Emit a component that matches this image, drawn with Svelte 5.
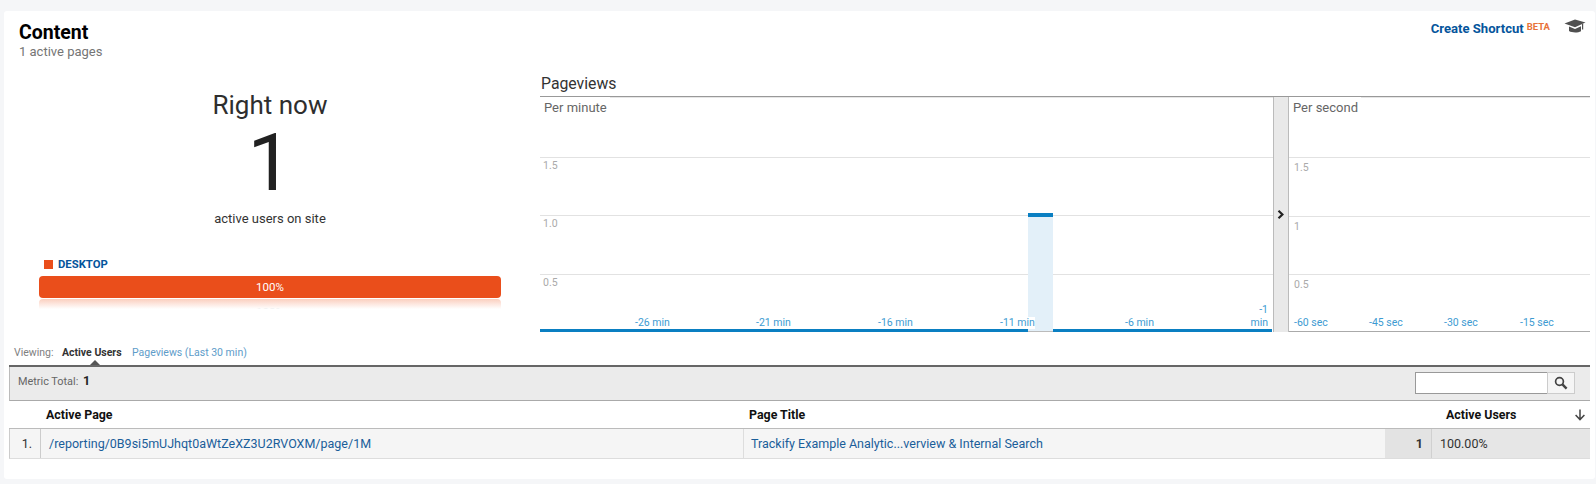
<script>
	const minuteGrid = [
		{ y: 59, label: '1.5' },
		{ y: 117, label: '1.0' },
		{ y: 176, label: '0.5' }
	];
	const secondGrid = [
		{ y: 59, label: '1.5' },
		{ y: 118, label: '1' },
		{ y: 176, label: '0.5' }
	];
	const minuteTicks = [
		{ x: 95, label: '-26 min' },
		{ x: 216, label: '-21 min' },
		{ x: 338, label: '-16 min' },
		{ x: 460, label: '-11 min' },
		{ x: 585, label: '-6 min' }
	];
	const secondTicks = [
		{ x: 5, label: '-60 sec' },
		{ x: 80, label: '-45 sec' },
		{ x: 155, label: '-30 sec' },
		{ x: 231, label: '-15 sec' }
	];
</script>

<div class="card">
	<header class="head">
		<div>
			<h1>Content</h1>
			<p class="sub">1 active pages</p>
		</div>
		<div class="shortcut">
			<a href="#top">Create Shortcut</a>
			<sup>BETA</sup>
			<svg class="cap" width="22" height="14" viewBox="0 0 22 14" aria-hidden="true">
				<path d="M0.5 4.5 11 0.5 21.5 3.6 11 8.2Z" fill="#505050" />
				<path d="M5 7.6 11 10 17 7.3V12.2C14 13.9 8 13.9 5 12Z" fill="#505050" />
				<path d="M18.6 5V10.6" stroke="#505050" stroke-width="1.2" />
			</svg>
		</div>
	</header>

	<section class="top">
		<div class="summary">
			<div class="now">Right now</div>
			<div class="count">1</div>
			<div class="users">active users on site</div>
			<div class="legend"><i></i><span>DESKTOP</span></div>
			<div class="bar">100%</div>
			<div class="mirror"><span>100%</span></div>
		</div>

		<div class="charts">
			<h2>Pageviews</h2>
			<div class="panels">
				<div class="plot minute">
					<div class="caption">Per minute</div>
					{#each minuteGrid as g}
						<div class="grid" style="top: {g.y}px"></div>
						<div class="ylabel" style="top: {g.y + 3}px">{g.label}</div>
					{/each}
					<div class="baseline"></div>
					<div class="column"></div>
					{#each minuteTicks as t}
						<div class="tick" style="left: {t.x}px">{t.label}</div>
					{/each}
					<div class="tick last">-1<br />min</div>
				</div>
				<div class="divider">
					<svg width="8" height="9" viewBox="0 0 8 9" aria-hidden="true">
						<path d="M1.5 0.8 5.4 4.5 1.5 8.2" fill="none" stroke="#222" stroke-width="2.2" />
					</svg>
				</div>
				<div class="plot second">
					<div class="caption">Per second</div>
					{#each secondGrid as g}
						<div class="grid" style="top: {g.y}px"></div>
						<div class="ylabel sec" style="top: {g.y + 5}px">{g.label}</div>
					{/each}
					{#each secondTicks as t}
						<div class="tick sec" style="left: {t.x}px">{t.label}</div>
					{/each}
				</div>
			</div>
		</div>
	</section>

	<nav class="tabs">
		<span class="viewing">Viewing:</span>
		<span class="active">Active Users</span>
		<a href="#top">Pageviews (Last 30 min)</a>
	</nav>

	<section class="table">
		<div class="toolbar">
			<div class="total">Metric Total: <b>1</b></div>
			<div class="search">
				<input type="text" aria-label="Search" />
				<button aria-label="Search">
					<svg width="14" height="14" viewBox="0 0 14 14" aria-hidden="true">
						<circle cx="5.5" cy="5.5" r="3.9" fill="none" stroke="#444" stroke-width="1.7" />
						<path d="M8.4 8.4 12.6 12.6" stroke="#444" stroke-width="2.4" />
					</svg>
				</button>
			</div>
		</div>
		<div class="row heading">
			<div></div>
			<div class="c-page">Active Page</div>
			<div class="c-title">Page Title</div>
			<div class="c-users">
				<span>Active Users</span>
				<svg width="12" height="12" viewBox="0 0 12 12" aria-hidden="true">
					<path d="M6 0.5V10M1.6 6 6 10.6 10.4 6" fill="none" stroke="#444" stroke-width="1.5" />
				</svg>
			</div>
		</div>
		<div class="row data">
			<div class="num">1.</div>
			<div class="c-page"><a href="#top">/reporting/0B9si5mUJhqt0aWtZeXZ3U2RVOXM/page/1M</a></div>
			<div class="c-title"><a href="#top">Trackify Example Analytic...verview &amp; Internal Search</a></div>
			<div class="value">1</div>
			<div class="pct">100.00%</div>
		</div>
	</section>
</div>

<style>
	:global(body) {
		margin: 0;
		background: #f5f6f8;
		font-family: Roboto, 'Liberation Sans', sans-serif;
		overflow: hidden;
	}
	.card {
		margin: 11px 1px 0 4px;
		height: 468px;
		background: #fff;
		border-radius: 3px;
		box-sizing: border-box;
	}
	.head {
		height: 49px;
		padding: 11px 9px 0 15px;
		box-sizing: border-box;
		display: flex;
		justify-content: space-between;
	}
	h1 {
		margin: 0;
		font-size: 19.5px;
		line-height: 22px;
		font-weight: 700;
		color: #000;
	}
	.sub {
		margin: 0;
		font-size: 13px;
		line-height: 16px;
		color: #757575;
	}
	.shortcut {
		display: flex;
		align-items: flex-start;
		height: 20px;
		margin-top: -1px;
	}
	.shortcut a {
		font-size: 13.1px;
		font-weight: 700;
		line-height: 10px;
		padding-top: 3px;
		color: #05559c;
		text-decoration: none;
	}
	.shortcut sup {
		font-size: 9.5px;
		font-weight: 700;
		line-height: 10px;
		color: #e8733a;
		margin: 1px 0 0 3px;
	}
	.cap {
		margin: -2px 0 0 14px;
	}
	.top {
		height: 280px;
		display: flex;
	}
	.summary {
		width: 462px;
		margin-left: 35px;
		text-align: center;
		color: #212121;
	}
	.now {
		margin-top: 27px;
		font-size: 26px;
		line-height: 36px;
		font-weight: 400;
		color: #2e2e2e;
	}
	.count {
		font-size: 80px;
		line-height: 80px;
		font-weight: 400;
	}
	.users {
		margin-top: 8px;
		font-size: 13px;
		line-height: 16px;
		color: #333;
	}
	.legend {
		margin: 31px 0 0 5px;
		height: 13px;
		display: flex;
		align-items: center;
		gap: 5px;
		font-size: 11.3px;
		font-weight: 700;
		color: #05559c;
	}
	.legend i {
		width: 9px;
		height: 9px;
		background: #ea4e1b;
	}
	.bar {
		margin-top: 5px;
		height: 22px;
		line-height: 22px;
		background: #ea4e1b;
		border-radius: 4px;
		color: #fff;
		font-size: 11.5px;
	}
	.mirror {
		margin-top: 1px;
		height: 10px;
		overflow: hidden;
		background: linear-gradient(#fbcfbf, #fff);
		border-radius: 4px 4px 0 0;
		font-size: 11.5px;
		color: #f2f2f2;
	}
	.mirror span {
		display: block;
		transform: translateY(7px);
		line-height: 12px;
	}
	.charts {
		margin-left: 39px;
		width: 1050px;
	}
	h2 {
		margin: 0;
		padding: 15px 0 0 1px;
		height: 21px;
		font-size: 15.8px;
		line-height: 18px;
		font-weight: 400;
		color: #333;
		border-bottom: 1px solid #999;
	}
	.panels {
		display: flex;
		height: 235px;
	}
	.plot {
		position: relative;
		border-top: 1px solid #e6e6e6;
		box-sizing: border-box;
	}
	.minute {
		width: 733px;
	}
	.second {
		width: 301px;
		border-bottom: 1px solid #aaa;
	}
	.caption {
		position: absolute;
		left: 0;
		top: -1px;
		padding: 2px 0 0 4px;
		background: #fff;
		font-size: 13px;
		line-height: 17px;
		color: #666;
		width: 66px;
		white-space: nowrap;
	}
	.second .caption {
		width: 68px;
	}
	.grid {
		position: absolute;
		left: 0;
		right: 0;
		height: 1px;
		background: #e2e2e2;
	}
	.ylabel {
		position: absolute;
		left: 3px;
		font-size: 10.5px;
		line-height: 12px;
		color: #aaa;
	}
	.ylabel.sec {
		left: 5px;
	}
	.baseline {
		position: absolute;
		left: 0;
		right: 1px;
		bottom: 0;
		height: 3px;
		background: #0a7fc2;
	}
	.column {
		position: absolute;
		left: 488px;
		width: 25px;
		top: 115px;
		bottom: 0;
		box-sizing: border-box;
		background: #e3f0f9;
		border-top: 4px solid #0a7fc2;
		border-bottom: 1px solid #bbb;
	}
	.tick {
		position: absolute;
		bottom: 3px;
		font-size: 10.5px;
		line-height: 12px;
		color: #3d9bd2;
		background: #fff;
		white-space: nowrap;
	}
	.tick.last {
		right: 5px;
		text-align: right;
		line-height: 13px;
		background: none;
	}
	.tick.sec {
		bottom: 2px;
	}
	.divider {
		width: 16px;
		box-sizing: border-box;
		background: #e9e9e9;
		border-left: 1px solid #bbb;
		border-right: 1px solid #bbb;
		display: flex;
		justify-content: center;
		padding-top: 113px;
	}
	.tabs {
		height: 25px;
		padding-left: 10px;
		display: flex;
		align-items: center;
		gap: 6px;
		box-sizing: border-box;
		position: relative;
		font-size: 10.5px;
	}
	.viewing {
		color: #808080;
		width: 42px;
	}
	.active {
		font-weight: 700;
		color: #333;
		width: 64px;
	}
	.active::after {
		content: '';
		position: absolute;
		left: 86px;
		bottom: 0;
		border: 5px solid transparent;
		border-top: 0;
		border-bottom-color: #555;
	}
	.tabs a {
		color: #5e9cc9;
		text-decoration: none;
	}
	.table {
		margin: 0 5px;
		border-top: 2px solid #666;
	}
	.toolbar {
		height: 34px;
		box-sizing: border-box;
		background: #ebebeb;
		border-left: 1px solid #bbb;
		border-bottom: 1px solid #aaa;
		display: flex;
		justify-content: space-between;
		padding: 5px 15px 0 8px;
	}
	.total {
		font-size: 10.9px;
		line-height: 17px;
		color: #666;
	}
	.total b {
		margin-left: 2px;
		font-size: 12.5px;
		color: #222;
	}
	.search {
		display: flex;
		height: 22px;
	}
	.search input {
		width: 132px;
		height: 22px;
		margin: 0;
		padding: 0;
		box-sizing: border-box;
		border: 1px solid #999;
		border-right: 0;
		background: #fff;
	}
	.search button {
		width: 28px;
		height: 22px;
		padding: 2px 0 0;
		box-sizing: border-box;
		background: #f5f5f5;
		border: 1px solid #ccc;
		border-radius: 0;
	}
	.row {
		display: grid;
		grid-template-columns: 31px 702px 642px 47px 158px;
		box-sizing: border-box;
		border-left: 1px solid #ccc;
	}
	.heading {
		height: 28px;
		border-bottom: 1px solid #bbb;
		border-left: 0;
		align-items: center;
		font-size: 12.4px;
		font-weight: 700;
		color: #111;
	}
	.heading .c-page {
		padding-left: 6px;
	}
	.heading .c-title {
		padding-left: 7px;
	}
	.c-users {
		grid-column: 4 / 6;
		display: flex;
		justify-content: space-between;
		align-items: center;
		padding: 0 3px 0 62px;
	}
	.data {
		height: 30px;
		border-bottom: 1px solid #ddd;
		font-size: 12.5px;
		line-height: 29px;
		background: #f5f5f5;
		color: #333;
	}
	.data a {
		color: #1a5e9a;
		text-decoration: none;
	}
	.num {
		text-align: right;
		padding-right: 8px;
		border-right: 1px solid #ccc;
		font-size: 12.5px;
	}
	.data .c-page {
		padding-left: 8px;
	}
	.data .c-title {
		padding-left: 7px;
		border-left: 1px solid #ddd;
	}
	.value {
		text-align: right;
		padding-right: 8px;
		background: #e3e3e3;
		font-weight: 700;
		font-size: 12.5px;
		border-right: 1px solid #d0d0d0;
	}
	.pct {
		padding-left: 8px;
		background: #e6e6e6;
	}
</style>
